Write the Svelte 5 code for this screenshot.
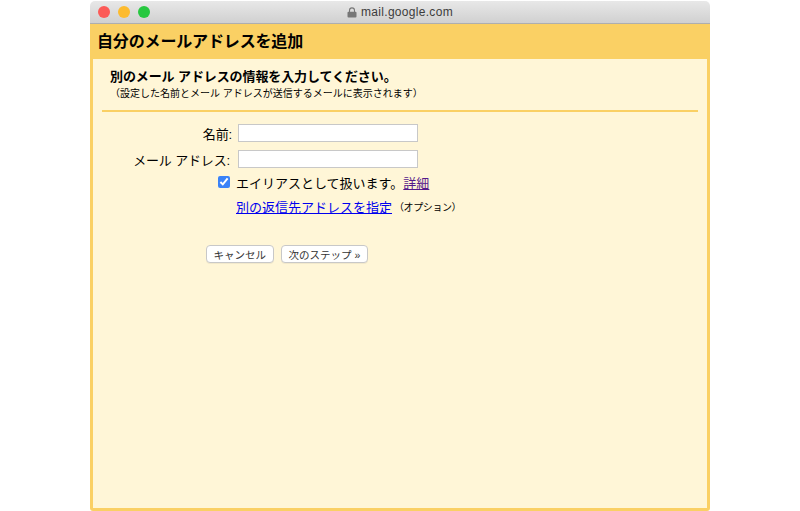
<script>
  let name = $state('');
  let address = $state('');
  let alias = $state(true);
</script>

<div class="window">
  <div class="titlebar">
    <div class="lights">
      <span class="light red"></span>
      <span class="light yellow"></span>
      <span class="light green"></span>
    </div>
    <div class="url">
      <svg width="10" height="11" viewBox="0 0 10 11">
        <path d="M2.5 5V3.4a2.5 2.5 0 0 1 5 0V5" fill="none" stroke="#777" stroke-width="1.1" />
        <rect x="0.5" y="4.8" width="9" height="5.7" rx="1" fill="#777" />
      </svg>
      <span>mail.google.com</span>
    </div>
  </div>

  <div class="panel">
    <h1>自分のメールアドレスを追加</h1>
    <div class="content">
      <div class="intro">
        <h2>別のメール アドレスの情報を入力してください。</h2>
        <p>（設定した名前とメール アドレスが送信するメールに表示されます）</p>
      </div>
      <hr />

      <div class="form">
        <label class="name-label" for="name">名前:</label>
        <input id="name" type="text" bind:value={name} />
        <label for="address">メール アドレス:</label>
        <input id="address" type="text" bind:value={address} />
      </div>

      <div class="alias">
        <input id="alias" class="check" type="checkbox" bind:checked={alias} />
        <label for="alias">エイリアスとして扱います。</label>
        <a class="visited" href="#details">詳細</a>
      </div>

      <div class="reply">
        <a href="#reply">別の返信先アドレスを指定</a>
        <span>（オプション）</span>
      </div>

      <div class="actions">
        <button>キャンセル</button>
        <button class="next">次のステップ »</button>
      </div>
    </div>
  </div>
</div>

<style>
  :global(body) {
    margin: 0;
    background-color: #ffffff;
    font-family: "Liberation Sans", "Noto Sans CJK JP", sans-serif;
    color: #000;
  }

  .window {
    width: 620px;
    height: 510px;
    margin: 1px 0 0 90px;
    display: flex;
    flex-direction: column;
    border-radius: 5px 5px 3px 3px;
    overflow: hidden;
  }

  .titlebar {
    height: 23px;
    flex-shrink: 0;
    box-sizing: border-box;
    display: flex;
    align-items: center;
    justify-content: center;
    position: relative;
    background: linear-gradient(#e8e8e8, #d0d0d0);
    border-bottom: 1px solid #aeaeae;
  }

  .lights {
    position: absolute;
    left: 8px;
    top: 5px;
    display: flex;
    gap: 8px;
  }

  .light {
    width: 12px;
    height: 12px;
    border-radius: 50%;
  }

  .red { background-color: #fc5b57; }
  .yellow { background-color: #fdbb2e; }
  .green { background-color: #27c840; }

  .url {
    display: flex;
    align-items: center;
    gap: 4px;
    font-size: 12px;
    color: #3c3c3c;
    letter-spacing: 0.3px;
  }

  .panel {
    flex: 1;
    display: flex;
    flex-direction: column;
    min-height: 0;
    box-sizing: border-box;
    background-color: #fad064;
    padding: 0 3px 3px;
  }

  h1 {
    margin: 0;
    height: 35px;
    line-height: 36px;
    padding-left: 4px;
    font-size: 16px;
    font-weight: bold;
    letter-spacing: -0.15px;
    flex-shrink: 0;
  }

  .content {
    flex: 1;
    background-color: #fff6d7;
    padding: 0 9px;
  }

  .intro {
    padding: 9px 0 0 8px;
  }

  h2 {
    margin: 0;
    font-size: 13px;
    line-height: 18px;
    font-weight: bold;
    letter-spacing: -0.1px;
  }

  p {
    margin: 0;
    font-size: 10px;
    line-height: 15px;
  }

  hr {
    margin: 9px 0 0;
    border: none;
    height: 2px;
    background-color: #fad064;
  }

  .form {
    display: grid;
    grid-template-columns: 136px 180px;
    grid-auto-rows: 18px;
    row-gap: 8px;
    margin-top: 12px;
    font-size: 13px;
    align-items: center;
  }

  .form label {
    text-align: right;
    padding-right: 8px;
    letter-spacing: -0.15px;
  }

  .form .name-label {
    padding-right: 6px;
  }

  .form input {
    width: 180px;
    height: 18px;
    box-sizing: border-box;
    border: 1px solid #c8c8c8;
    background-color: #fff;
    padding: 0 3px;
    margin: 0;
    outline: none;
  }

  .alias {
    display: flex;
    align-items: center;
    margin: 5px 0 0 116px;
    height: 18px;
    font-size: 13px;
  }

  .check {
    width: 12px;
    height: 12px;
    margin: 0 6px 0 0;
    accent-color: #3a82f7;
  }

  a {
    color: #0000ee;
    text-decoration: underline;
  }

  a.visited {
    color: #551a8b;
  }

  .reply {
    display: flex;
    align-items: center;
    margin: 6px 0 0 134px;
    height: 18px;
    font-size: 13px;
  }

  .reply span {
    font-size: 10px;
    letter-spacing: -0.4px;
    margin-left: 2px;
  }

  .actions {
    display: flex;
    gap: 7px;
    margin: 30px 0 0 104px;
  }

  button {
    height: 18px;
    padding: 0 6.5px;
    font-family: inherit;
    font-size: 10.5px;
    color: #333;
    background-color: #fff;
    border: 1px solid #c8c8c8;
    border-radius: 4px;
    box-shadow: 0 1px 0 rgba(0, 0, 0, 0.05);
  }

  .next {
    padding: 0 7px;
  }
</style>
